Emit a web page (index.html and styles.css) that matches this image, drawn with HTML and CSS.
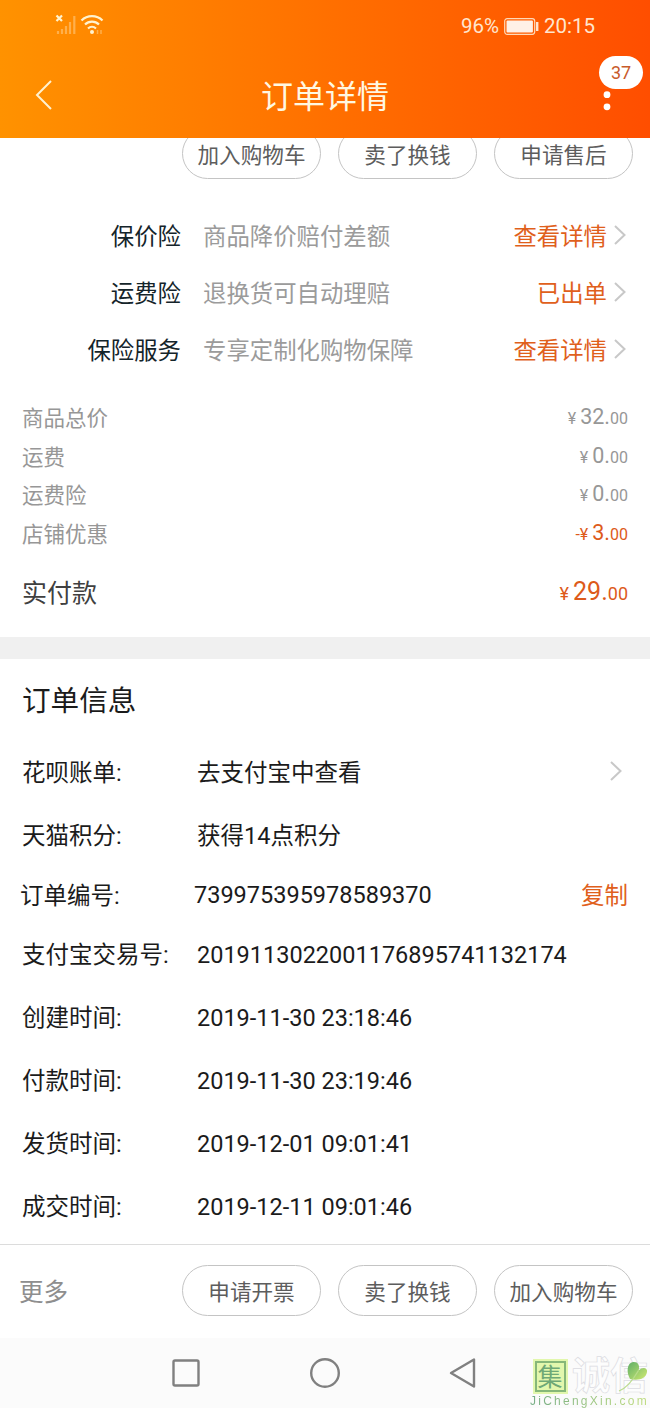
FILE: index.html
```html
<!DOCTYPE html>
<html lang="zh-CN">
<head>
<meta charset="utf-8">
<title>订单详情</title>
<link rel="stylesheet" href="styles.css">
</head>
<body>
<header class="header">
  <div class="status">
    <svg class="signal" width="52" height="22" viewBox="0 0 52 22">
      <path d="M1.500 1.500l5.500 5.500M7 1.500L1.500 7" stroke="#fff3cf" stroke-width="2.200"/>
      <path d="M3 17v3M7 15v5M11 12v8M15 8v12M19.300 2v18" stroke="#ffb04c" stroke-width="2.200"/>
      <g fill="none" stroke="#fff3cf" stroke-width="2.200"><path d="M26.500 6.500a15 15 0 0 1 21 0M30 10.500a10 10 0 0 1 14 0M33 14.500a6 6 0 0 1 8 0"/></g>
      <circle cx="37" cy="18" r="2" fill="#fff3cf"/>
      <path d="M42.500 16v4M46 16v4" stroke="#ffb04c" stroke-width="1.500"/>
    </svg>
    <div class="status-right">
      <span>96%</span>
      <svg width="35" height="17" viewBox="0 0 35 17"><rect x=".7" y=".7" width="30" height="15.600" rx="2.500" fill="none" stroke="#ffd9b8" stroke-width="1.200"/><rect x="2.500" y="2.500" width="26.400" height="12" rx="1" fill="#fff0e6"/><path d="M33.200 4v9" stroke="#ffe3cf" stroke-width="2.400"/></svg>
      <span>20:15</span>
    </div>
  </div>
  <div class="titlebar">
    <svg class="back" width="18" height="30" viewBox="0 0 18 30"><path d="M16 1L2 15l14 14" fill="none" stroke="#fff1cf" stroke-width="2"/></svg>
    <h1 class="title">订单详情</h1>
    <svg class="more-dots" width="8" height="20" viewBox="0 0 8 20"><circle cx="4" cy="3.700" r="3.400" fill="#fff"/><circle cx="4" cy="15.800" r="3.400" fill="#fff"/></svg>
    <span class="badge">37</span>
  </div>
</header>
<main>
  <div class="actions actions-top">
    <span class="btn">加入购物车</span><span class="btn">卖了换钱</span><span class="btn">申请售后</span>
  </div>
  <section class="insurance">
    <div class="ins-row"><span class="ins-name">保价险</span><span class="ins-desc">商品降价赔付差额</span><span class="ins-link">查看详情</span><svg class="chev" width="14" height="20" viewBox="0 0 14 20"><path d="M2 1l9.500 9L2 19"/></svg></div>
    <div class="ins-row"><span class="ins-name">运费险</span><span class="ins-desc">退换货可自动理赔</span><span class="ins-link">已出单</span><svg class="chev" width="14" height="20" viewBox="0 0 14 20"><path d="M2 1l9.500 9L2 19"/></svg></div>
    <div class="ins-row"><span class="ins-name">保险服务</span><span class="ins-desc">专享定制化购物保障</span><span class="ins-link">查看详情</span><svg class="chev" width="14" height="20" viewBox="0 0 14 20"><path d="M2 1l9.500 9L2 19"/></svg></div>
  </section>
  <section class="prices">
    <div class="price-row"><span class="price-label">商品总价</span><span class="amount"><small class="yen">¥</small>32.<small>00</small></span></div>
    <div class="price-row"><span class="price-label">运费</span><span class="amount"><small class="yen">¥</small>0.<small>00</small></span></div>
    <div class="price-row"><span class="price-label">运费险</span><span class="amount"><small class="yen">¥</small>0.<small>00</small></span></div>
    <div class="price-row"><span class="price-label">店铺优惠</span><span class="amount hot"><small class="yen">-¥</small>3.<small>00</small></span></div>
    <div class="price-row total"><span class="price-label">实付款</span><span class="amount hot"><small class="yen">¥</small>29.<small>00</small></span></div>
  </section>
  <section class="info">
    <h2 class="info-title">订单信息</h2>
    <div class="info-row"><span class="label">花呗账单:</span><span class="value">去支付宝中查看</span><svg class="chev" width="14" height="20" viewBox="0 0 14 20"><path d="M2 1l9.500 9L2 19"/></svg></div>
    <div class="info-row"><span class="label">天猫积分:</span><span class="value">获得14点积分</span></div>
    <div class="info-row order-no"><span class="label">订单编号:</span><span class="value">739975395978589370</span><span class="copy">复制</span></div>
    <div class="info-row trade-no"><span class="label">支付宝交易号:</span><span class="value">2019113022001176895741132174</span></div>
    <div class="info-row"><span class="label">创建时间:</span><span class="value">2019-11-30 23:18:46</span></div>
    <div class="info-row"><span class="label">付款时间:</span><span class="value">2019-11-30 23:19:46</span></div>
    <div class="info-row"><span class="label">发货时间:</span><span class="value">2019-12-01 09:01:41</span></div>
    <div class="info-row"><span class="label">成交时间:</span><span class="value">2019-12-11 09:01:46</span></div>
  </section>
</main>
<footer class="actions actions-bottom">
  <span class="more">更多</span><span class="btn">申请开票</span><span class="btn">卖了换钱</span><span class="btn">加入购物车</span>
</footer>
<nav class="navbar">
  <svg width="32" height="32" viewBox="0 0 32 32"><rect x="3.500" y="3.500" width="25" height="25" rx="1.500"/></svg>
  <svg width="32" height="32" viewBox="0 0 32 32"><circle cx="16" cy="16" r="13.800"/></svg>
  <svg width="32" height="32" viewBox="0 0 32 32"><path d="M26 2.500v27L3 16z" stroke-linejoin="round"/></svg>
</nav>
<div class="watermark">
  <div class="wm-top">
    <span class="wm-seal">集</span>
    <span class="wm-name">诚信</span>
    <svg class="leaf" width="32" height="34" viewBox="0 0 32 34"><defs><linearGradient id="lf" x1="0" y1="0" x2="1" y2="1"><stop offset="0" stop-color="#5fae68"/><stop offset="1" stop-color="#d0ea70"/></linearGradient></defs><path d="M13 19C9 12 10 3 16 2c6-.500 7 5 5.500 8.500C26 6 31 8 30 12c-1 7-9 9-17 7z" fill="url(#lf)"/><path d="M21.500 10.500C16 20 10 28 2 31" fill="none" stroke="#b9dc8c" stroke-width="1.300"/></svg>
  </div>
  <div class="wm-url">JiChengXin.com</div>
</div>
</body>
</html>
```
FILE: styles.css
```css
* { box-sizing: border-box; }
body {
  margin: 0;
  width: 650px;
  height: 1408px;
  position: relative;
  overflow: hidden;
  display: flex;
  flex-direction: column;
  background: #fff;
  color: #1b1b1b;
  font-family: Roboto, "Noto Sans CJK SC", sans-serif;
  font-weight: 400;
}
h1, h2 { margin: 0; font-weight: 400; }
svg { display: block; flex: none; }

.header {
  height: 138px;
  flex: none;
  background: linear-gradient(90deg, #ff9200, #ff4e00);
  color: #fff3dc;
}
.status {
  height: 52px;
  display: flex;
  justify-content: space-between;
  align-items: center;
  padding: 0 55px;
}
.signal { margin-top: -2px; }
.status-right {
  display: flex;
  align-items: center;
  gap: 5px;
  font-size: 20.500px;
  line-height: 26px;
  color: #ffe6cf;
}
.titlebar {
  height: 86px;
  position: relative;
  display: flex;
  align-items: center;
  justify-content: space-between;
  padding: 0 39px 0 35px;
}
.title { font-size: 32px; line-height: 46px; padding: 3px 6px 0 0; color: #fff8e2; }
.more-dots { margin-top: 12px; }
.badge {
  position: absolute;
  left: 599px;
  top: 4px;
  width: 44px;
  height: 33px;
  border-radius: 17px;
  background: #fff;
  color: #c85a2a;
  font-size: 18px;
  line-height: 34px;
  text-align: center;
}

main { height: 1106px; flex: none; }
.actions { display: flex; justify-content: flex-end; gap: 17px; padding-right: 17px; }
.actions-top { height: 41px; align-items: flex-end; overflow: hidden; }
.btn {
  width: 139px;
  height: 51px;
  flex: none;
  border: 1px solid #c4c4c4;
  border-radius: 26px;
  font-size: 21.600px;
  line-height: 53px;
  color: #5d5d5d;
  text-align: center;
}

.insurance { padding-top: 28px; height: 220px; font-size: 23.400px; }
.ins-row { height: 57px; display: flex; align-items: center; padding-right: 23px; line-height: 34px; }
.ins-row span { padding-top: 3px; }
.ins-row .chev { margin-top: -2px; }
.ins-name { width: 181px; text-align: right; color: #14242a; }
.ins-desc { padding-left: 22px; color: #9b9b9b; flex: 1; }
.ins-link { color: #e0601c; padding-right: 6px; }
.chev { fill: none; stroke: #c8c8c8; stroke-width: 2; }

.prices { height: 238px; padding: 0 22px; font-size: 21.500px; color: #979797; }
.price-row { height: 38.500px; display: flex; justify-content: space-between; align-items: center; line-height: 32px; }
.price-label { padding-top: 2px; }
.amount small { font-size: 16px; }
.amount .yen { margin-right: 4px; }
.hot { color: #dd5a1a; }
.total { height: 80px; font-size: 25px; color: #404040; }
.total .hot { color: #dd5a1a; }
.total small { font-size: 18px; }

.info { border-top: 22px solid #f0f0f0; font-size: 23.500px; }
.info-title { height: 81px; padding: 0 22px; font-size: 28.600px; line-height: 85px; color: #1b1b1b; }
.info-row { height: 63px; display: flex; align-items: center; padding: 0 27px 0 22px; line-height: 34px; }
.label { width: 175px; flex: none; padding-top: 2px; white-space: nowrap; }
.value { flex: 1; padding-top: 2px; white-space: nowrap; }
.info-row .chev { margin-top: -2px; }
.order-no { height: 57px; padding: 0 22px 0 20px; }
.order-no .label { width: 174px; }
.order-no .value { padding-top: 0; }
.trade-no { height: 62px; }
.copy { color: #e0601c; padding-top: 2px; }

.actions-bottom { height: 94px; flex: none; border-top: 1px solid #dcdcdc; align-items: flex-start; padding-top: 20px; }
.more { flex: 1; padding-left: 19px; font-size: 24.500px; line-height: 55px; color: #8e8e8e; }

.navbar {
  height: 70px;
  flex: none;
  display: flex;
  justify-content: center;
  align-items: center;
  gap: 107px;
  background: #fbfbfb;
}
.navbar svg { fill: none; stroke: #808080; stroke-width: 2.400; }

.watermark { position: absolute; left: 530px; top: 1359px; width: 120px; height: 49px; }
.wm-top { height: 35px; display: flex; align-items: flex-start; gap: 6px; padding: 2px 0 0 5px; position: relative; }
.wm-seal {
  width: 31px;
  height: 31px;
  flex: none;
  border: 2px solid #86b779;
  outline: 2px solid #e2f7ad;
  background: #e2f7ad;
  color: #6fa876;
  font-size: 25px;
  line-height: 29px;
  text-align: center;
  text-indent: -1px;
}
.wm-name {
  font-size: 38px;
  line-height: 31px;
  height: 31px;
  font-weight: 700;
  color: #fdfdfd;
  -webkit-text-stroke: 0.700px #dcdce2;
  white-space: nowrap;
}
.leaf { position: absolute; left: 87px; top: 1px; }
.wm-url {
  font-family: "Liberation Sans", Arial, sans-serif;
  font-size: 12px;
  line-height: 14px;
  letter-spacing: 2.250px;
  white-space: nowrap;
  color: transparent;
  background: linear-gradient(90deg, #76ad86, #bfdc7c);
  -webkit-background-clip: text;
  background-clip: text;
}
```
